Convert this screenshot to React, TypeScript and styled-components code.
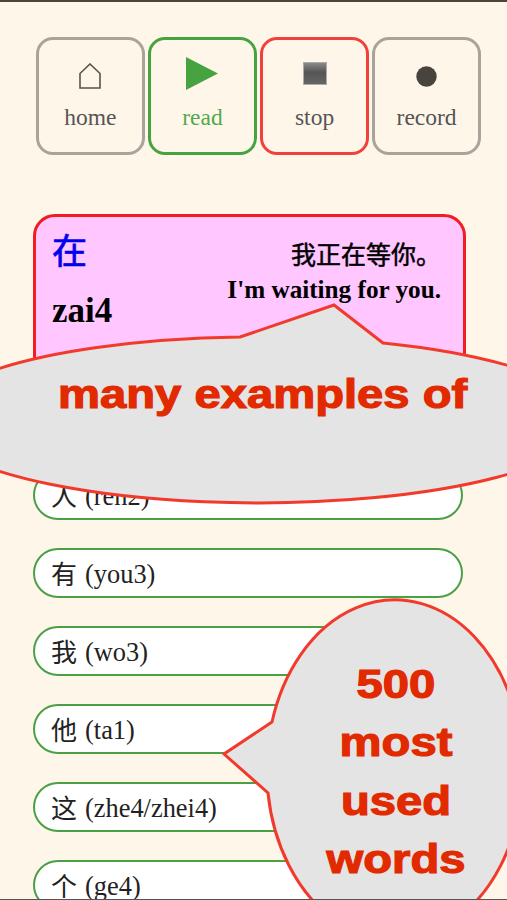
import React, { FC } from 'react';
import styled, { createGlobalStyle } from 'styled-components';

const GlobalStyle = createGlobalStyle`
  html, body {
    margin: 0;
    padding: 0;
    background: #fff6ea;
  }
`;

const Screen = styled.div`
  position: relative;
  width: 507px;
  height: 900px;
  overflow: hidden;
  box-sizing: border-box;
  padding: 35px 26px 0 33px;
  background: #fff6ea;
  border-top: 2px solid #4a463e;
  border-bottom: 1px solid #555;
  font-family: 'Liberation Serif', 'Noto Sans CJK SC', serif;
`;

const Toolbar = styled.div`
  display: flex;
  gap: 3.3px;
  margin-left: 3px;
`;

const ToolButton = styled.div<{ $tone: string; $text: string }>`
  box-sizing: border-box;
  width: 109px;
  height: 118px;
  border: 3px solid ${({ $tone }) => $tone};
  border-radius: 17px;
  display: flex;
  flex-direction: column;
  align-items: center;
  color: ${({ $text }) => $text};
  font-size: 23.5px;
`;

const IconSlot = styled.div<{ $shift: number }>`
  height: 58px;
  width: 100%;
  display: flex;
  align-items: center;
  justify-content: center;
  margin-top: 6px;
  padding-bottom: ${({ $shift }) => ($shift < 0 ? -2 * $shift : 0)}px;
  padding-top: ${({ $shift }) => ($shift > 0 ? 2 * $shift : 0)}px;
  box-sizing: border-box;
`;

const Card = styled.div`
  box-sizing: border-box;
  width: 433px;
  height: 240px;
  margin-top: 59px;
  padding: 9px 22px 0 16px;
  background: #ffc6ff;
  border: 3px solid #f01e22;
  border-radius: 22px;
  display: flex;
  justify-content: space-between;
  color: #000;
`;

const WordColumn = styled.div`
  display: flex;
  flex-direction: column;
`;

const Hanzi = styled.div`
  font-family: 'Noto Sans CJK SC', sans-serif;
  font-size: 35px;
  line-height: 46px;
  color: #0000f0;
  -webkit-text-stroke: 0.7px #0000f0;
`;

const Pinyin = styled.div`
  font-size: 35px;
  line-height: 40px;
  font-weight: bold;
  margin-top: 19px;
`;

const SentenceColumn = styled.div`
  display: flex;
  flex-direction: column;
  align-items: flex-end;
`;

const Sentence = styled.div`
  font-family: 'Noto Sans CJK SC', sans-serif;
  font-size: 25px;
  line-height: 34px;
  margin-top: 10px;
  -webkit-text-stroke: 0.5px #000;
`;

const Translation = styled.div`
  font-size: 25.2px;
  font-weight: bold;
  line-height: 30px;
  margin-top: 5px;
`;

const WordList = styled.div`
  display: flex;
  flex-direction: column;
  gap: 28px;
  margin-top: 16px;
`;

const WordRow = styled.div`
  box-sizing: border-box;
  flex: none;
  width: 430px;
  height: 50px;
  padding: 2px 0 0 16px;
  background: #fff;
  border: 2px solid #4ba045;
  border-radius: 25px;
  display: flex;
  align-items: center;
  font-size: 26.4px;
  color: #222;
`;

const RowHanzi = styled.span`
  font-family: 'Noto Sans CJK SC', sans-serif;
  font-size: 26px;
  margin: 0 8px 4px 0;
`;

const Bubble = styled.div`
  position: absolute;
  left: 0;
  top: -2px;
  width: 507px;
  height: 900px;
  pointer-events: none;
`;

const BubbleShape = styled.svg`
  position: absolute;
  left: 0;
  top: 0;
`;

const ExamplesText = styled.div`
  position: absolute;
  left: 58px;
  top: 369px;
  font-family: 'Liberation Sans', sans-serif;
  font-weight: bold;
  font-size: 40px;
  line-height: 50px;
  white-space: nowrap;
  color: #e22a00;
  -webkit-text-stroke: 1.2px #e22a00;
  transform: scaleX(1.18);
  transform-origin: left center;
`;

const WordsText = styled.div`
  position: absolute;
  left: 296px;
  top: 655px;
  width: 200px;
  text-align: center;
  font-family: 'Liberation Sans', sans-serif;
  font-weight: bold;
  font-size: 40px;
  line-height: 58.4px;
  color: #e22a00;
  -webkit-text-stroke: 1.2px #e22a00;
  transform: scaleX(1.18);
`;

const HomeIcon: FC = () => (
  <svg width="22" height="26" viewBox="0 0 22 26">
    <path d="M1 25V10.5L11 1l10 9.5V25Z" fill="none" stroke="#5a5248" strokeWidth="1.6" />
  </svg>
);

const PlayIcon: FC = () => (
  <svg width="34" height="33" viewBox="0 0 34 33">
    <path d="M1 0l32 16.5L1 33Z" fill="#46a340" />
  </svg>
);

const StopIcon: FC = () => (
  <svg width="24" height="23" viewBox="0 0 24 23">
    <defs>
      <linearGradient id="stopFill" x1="0" y1="0" x2="0" y2="1">
        <stop offset="0" stopColor="#8c8c8c" />
        <stop offset="0.45" stopColor="#555" />
        <stop offset="1" stopColor="#666" />
      </linearGradient>
    </defs>
    <rect x="0.5" y="0.5" width="23" height="22" fill="url(#stopFill)" stroke="#aaa" strokeWidth="1" />
  </svg>
);

const RecordIcon: FC = () => (
  <svg width="21" height="21" viewBox="0 0 21 21">
    <circle cx="10.5" cy="10.5" r="10.2" fill="#47443e" />
  </svg>
);

const buttons = [
  { label: 'home', tone: '#a8a49c', text: '#555', shift: 1, icon: <HomeIcon /> },
  { label: 'read', tone: '#46a340', text: '#52a94c', shift: -2, icon: <PlayIcon /> },
  { label: 'stop', tone: '#f2403c', text: '#555', shift: -2, icon: <StopIcon /> },
  { label: 'record', tone: '#a8a49c', text: '#555', shift: 1, icon: <RecordIcon /> },
];

const words = [
  ['人', '(ren2)'],
  ['有', '(you3)'],
  ['我', '(wo3)'],
  ['他', '(ta1)'],
  ['这', '(zhe4/zhei4)'],
  ['个', '(ge4)'],
];

const App: FC = () => {
  return (
    <>
      <GlobalStyle />
      <Screen>
        <Toolbar>
          {buttons.map((b) => (
            <ToolButton key={b.label} $tone={b.tone} $text={b.text}>
              <IconSlot $shift={b.shift}>{b.icon}</IconSlot>
              {b.label}
            </ToolButton>
          ))}
        </Toolbar>
        <Card>
          <WordColumn>
            <Hanzi>在</Hanzi>
            <Pinyin>zai4</Pinyin>
          </WordColumn>
          <SentenceColumn>
            <Sentence>我正在等你。</Sentence>
            <Translation>I'm waiting for you.</Translation>
          </SentenceColumn>
        </Card>
        <WordList>
          {words.map(([hanzi, pinyin]) => (
            <WordRow key={hanzi}>
              <RowHanzi>{hanzi}</RowHanzi>
              {pinyin}
            </WordRow>
          ))}
        </WordList>
        <Bubble>
          <BubbleShape width="507" height="900" viewBox="0 0 507 900">
            <path
              d="M240 337 L334 305 L383 343 A330 83 0 1 1 240 337 Z"
              fill="#e4e4e4"
              stroke="#f23a2c"
              strokeWidth="3"
            />
            <path
              d="M272 722 L224 754 L268 793 A128 170 0 1 0 272 722 Z"
              fill="#e4e4e4"
              stroke="#f23a2c"
              strokeWidth="3"
            />
          </BubbleShape>
          <ExamplesText>many examples of</ExamplesText>
          <WordsText>
            500
            <br />
            most
            <br />
            used
            <br />
            words
          </WordsText>
        </Bubble>
      </Screen>
    </>
  );
};

export default App;
